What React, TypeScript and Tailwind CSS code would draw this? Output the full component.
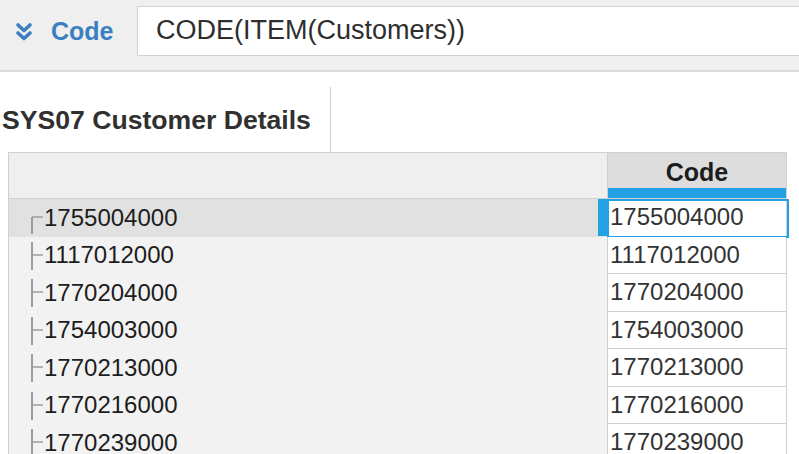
import React from 'react';

const rows = [
  '1755004000',
  '1117012000',
  '1770204000',
  '1754003000',
  '1770213000',
  '1770216000',
  '1770239000',
];

function TreeMark({ first }: { first: boolean }) {
  return (
    <svg width="14" height="37" viewBox="0 0 14 37" className="shrink-0">
      <line x1="1" y1={first ? 18 : 5} x2="1" y2={first ? 35 : 33} stroke="#9c9c9c" strokeWidth="2" />
      <line x1="1" y1="18" x2="12" y2="18" stroke="#9c9c9c" strokeWidth="1.5" />
    </svg>
  );
}

export default function App() {
  return (
    <div className="w-[799px] h-[454px] overflow-hidden bg-white font-['Liberation_Sans',Arial,sans-serif]">
      {/* Formula bar */}
      <div className="bg-[#efefef] pt-[6px] border-b-2 border-[#dadada]">
        <div className="flex items-stretch h-[50px]">
          <div className="w-[137px] flex items-center pl-[15px] gap-[18px]">
            <svg width="18" height="19" viewBox="0 0 18 19">
              <polyline points="3,3 9,8.5 15,3" fill="none" stroke="#3b7fc2" strokeWidth="3.6" strokeLinecap="round" strokeLinejoin="round" />
              <polyline points="3,11 9,16.5 15,11" fill="none" stroke="#3b7fc2" strokeWidth="3.6" strokeLinecap="round" strokeLinejoin="round" />
            </svg>
            <span className="text-[25px] font-bold text-[#3a7fc1] leading-none">Code</span>
          </div>
          <div className="flex-1 -mr-[10px] bg-white border border-[#d2d2d2] flex items-center pl-[18px] pb-[2px]">
            <span className="text-[27px] text-[#2e2e2e] leading-none">CODE(ITEM(Customers))</span>
          </div>
        </div>
        <div className="h-[14px]" />
      </div>

      {/* Title */}
      <div className="mt-[15px] w-[331px] h-[65px] border-r border-[#cfcfcf] pt-[18px] pl-[2px]">
        <h1 className="text-[26.6px] leading-[30px] font-bold text-[#303030]">SYS07 Customer Details</h1>
      </div>

      {/* Table */}
      <div className="ml-[8px] w-[779px] border border-[#d0d0d0] bg-[#f2f2f2]">
        <div className="flex h-[46px] border-b border-[#d0d0d0]">
          <div className="w-[598px] bg-[#efefef]" />
          <div className="flex-1 flex flex-col bg-[#dddddd] border-l border-[#d0d0d0]">
            <div className="flex-1 flex items-center justify-center text-[25px] font-bold text-[#1c1c1c] leading-none pt-[4px]">Code</div>
            <div className="h-[10px] bg-[#22a2e4]" />
          </div>
        </div>
        {rows.map((code, i) => (
          <div key={code} className="flex h-[37.5px]">
            <div className={`w-[598px] flex items-center pl-[22px] ${i === 0 ? 'bg-[#e1e1e1]' : 'bg-[#f2f2f2]'}`}>
              <TreeMark first={i === 0} />
              <span className="text-[24px] text-[#1d1d1d] leading-none -ml-[1px]">{code}</span>
            </div>
            <div className="relative flex-1 bg-white border-l border-b border-[#d0d0d0] flex items-center pl-[2px]">
              <span className="text-[24px] text-[#333] leading-none">{code}</span>
              {i === 0 && (
                <>
                  <div className="absolute -left-[1px] top-0 -right-[3px] -bottom-[2px] border-2 border-[#22a2e4]" />
                  <div className="absolute -left-[10px] top-0 w-[10px] h-full bg-[#22a2e4]" />
                </>
              )}
            </div>
          </div>
        ))}
      </div>
    </div>
  );
}
